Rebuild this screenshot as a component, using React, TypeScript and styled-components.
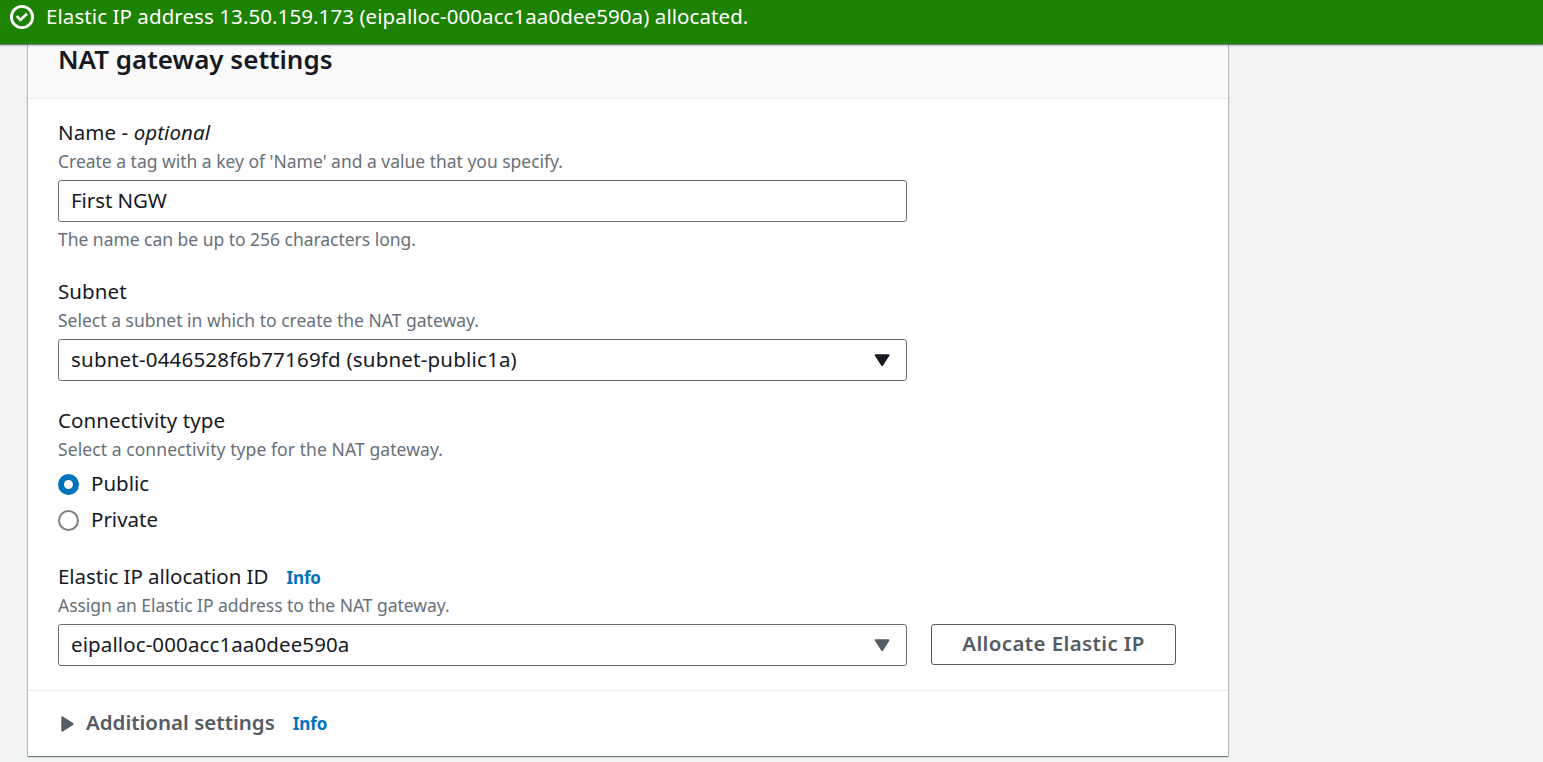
import React, { useState } from "react";
import styled, { createGlobalStyle } from "styled-components";

const GlobalStyle = createGlobalStyle`
  * { box-sizing: border-box; }
  body {
    margin: 0;
    background: #f2f3f3;
    color: #16191f;
    font-family: "Amazon Ember", "Noto Sans", "Open Sans", sans-serif;
    font-size: 20.5px;
    line-height: 33px;
    overflow: hidden;
  }
  button, input { font: inherit; color: inherit; }
`;

type Tracking = { $track?: number };

const Page = styled.div`
  height: 762px;
  display: flex;
  flex-direction: column;
`;

const Flash = styled.div`
  flex: none;
  position: relative;
  z-index: 1;
  height: 44px;
  padding: 0 10px 10px;
  display: flex;
  align-items: center;
  gap: 12px;
  background: #1d8102;
  color: #fff;
  box-shadow: 0 1px 1px 0 rgba(0, 28, 36, 0.5), 0 2px 2px 0 rgba(0, 28, 36, 0.15);
`;

const FlashText = styled.span`
  padding-bottom: 2px;
  letter-spacing: 0.075px;
  white-space: nowrap;
`;

const Card = styled.section`
  width: 1200px;
  height: 712px;
  margin-left: 28px;
  background: #fff;
  box-shadow: 0 1px 1px 0 rgba(0, 28, 36, 0.3), 1px 1px 1px 0 rgba(0, 28, 36, 0.2),
    -1px 1px 1px 0 rgba(0, 28, 36, 0.2);
`;

const CardHeader = styled.header`
  height: 55px;
  padding: 0 30px;
  background: #fafafa;
  border-bottom: 1px solid #eaeded;
`;

const CardTitle = styled.h2`
  margin: 0;
  font-size: 26px;
  font-weight: 600;
  line-height: 31px;
`;

const CardBody = styled.div`
  height: 591px;
  padding: 18px 30px 0;
  display: flex;
  flex-direction: column;
  gap: 24px;
`;

const CardFooter = styled.footer`
  height: 66px;
  padding: 0 33px;
  border-top: 1px solid #eaeded;
  display: flex;
  align-items: center;
`;

const Field = styled.div`
  display: flex;
  flex-direction: column;
`;

const Label = styled.div<Tracking>`
  height: 33px;
  padding-bottom: 2px;
  display: flex;
  align-items: center;
  white-space: pre;
  letter-spacing: ${(p) => p.$track ?? 0.08}px;
`;

const Hint = styled.div<Tracking>`
  height: 24px;
  font-size: 17.5px;
  line-height: 22px;
  color: #687078;
  letter-spacing: ${(p) => p.$track ?? 0}px;
`;

const Description = styled(Hint)`
  margin-bottom: 6px;
`;

const Constraint = styled(Hint)`
  margin-top: 6px;
`;

const TextInput = styled.input`
  width: 849px;
  height: 42px;
  padding: 0 12px 2px;
  border: 1px solid #687078;
  border-radius: 3px;
  background: #fff;
  outline: none;
  letter-spacing: -0.08px;
`;

const SelectTrigger = styled.button<Tracking & { $muted?: boolean }>`
  width: 849px;
  height: 42px;
  padding: 0 15px 2px 12px;
  display: flex;
  align-items: center;
  justify-content: space-between;
  border: 1px solid #687078;
  border-radius: 3px;
  background: #fff;
  letter-spacing: ${(p) => p.$track}px;

  svg {
    margin-top: 2px;
    fill: ${(p) => (p.$muted ? "#545b64" : "#16191f")};
  }
`;

const Inline = styled.div`
  display: flex;
  align-items: flex-start;
  gap: 24px;
`;

const ActionButton = styled.button`
  width: 245px;
  height: 41px;
  padding: 0 0 2px;
  border: 1px solid #545b64;
  border-radius: 3px;
  background: #fff;
  color: #545b64;
  font-weight: 600;
  letter-spacing: 0.38px;
`;

const RadioGroup = styled.div`
  display: flex;
  flex-direction: column;
  gap: 3px;
`;

const RadioOption = styled.label`
  height: 33px;
  padding-bottom: 2px;
  display: flex;
  align-items: center;
  gap: 12px;
  letter-spacing: 0;
`;

const RadioInput = styled.input`
  appearance: none;
  width: 21px;
  height: 21px;
  margin: 1px 0 0;
  border: 2px solid #7a8188;
  border-radius: 50%;
  background: #fff;

  &:checked { border: 6px solid #0073bb; }
`;

const InfoLink = styled.a`
  margin: 2px 0 0 18px;
  color: #0073bb;
  font-size: 17px;
  font-weight: 700;
  letter-spacing: -0.1px;
`;

const Expander = styled.span`
  margin-left: 12px;
  padding-bottom: 2px;
  color: #545b64;
  font-weight: 600;
  letter-spacing: 0;
`;

const FooterInfoLink = styled(InfoLink)`
  margin-top: 0;
`;

const CheckIcon = () => (
  <svg width="24" height="24" viewBox="0 0 24 24" fill="none" stroke="#fff">
    <circle cx="12" cy="12" r="10.6" strokeWidth="2.8" />
    <path strokeWidth="2.6" d="M6.8 11.2 10.4 15 17 8.7" />
  </svg>
);

const CaretDown = () => (
  <svg width="17" height="13" viewBox="0 0 17 13">
    <path d="M1.7 0.2H14.5Q16.2 0.2 15.3 1.7L9 11.5Q8.1 12.7 7.2 11.5L0.9 1.7Q0 0.2 1.7 0.2Z" />
  </svg>
);

const CaretRight = () => (
  <svg width="13" height="16" viewBox="0 0 13 16">
    <path fill="#545b64" d="M0.3 1.5Q0.3-0.2 1.8 0.6L12 7.1Q13.1 8 12 8.9L1.8 15.4Q0.3 16.2 0.3 14.5Z" />
  </svg>
);

export default function App() {
  const [name, setName] = useState("First NGW");
  const [connectivity, setConnectivity] = useState("Public");

  return (
    <Page>
      <GlobalStyle />
      <Flash>
        <CheckIcon />
        <FlashText>Elastic IP address 13.50.159.173 (eipalloc-000acc1aa0dee590a) allocated.</FlashText>
      </Flash>
      <Card>
        <CardHeader>
          <CardTitle>NAT gateway settings</CardTitle>
        </CardHeader>
        <CardBody>
          <Field>
            <Label>
              Name - <i>optional</i>
            </Label>
            <Description $track={-0.015}>Create a tag with a key of 'Name' and a value that you specify.</Description>
            <TextInput value={name} onChange={(e) => setName(e.target.value)} />
            <Constraint $track={-0.03}>The name can be up to 256 characters long.</Constraint>
          </Field>
          <Field>
            <Label>Subnet</Label>
            <Description>Select a subnet in which to create the NAT gateway.</Description>
            <SelectTrigger $track={0.2}>
              subnet-0446528f6b77169fd (subnet-public1a)
              <CaretDown />
            </SelectTrigger>
          </Field>
          <Field>
            <Label>Connectivity type</Label>
            <Description $track={0.08}>Select a connectivity type for the NAT gateway.</Description>
            <RadioGroup>
              {["Public", "Private"].map((option) => (
                <RadioOption key={option}>
                  <RadioInput
                    type="radio"
                    name="connectivity"
                    checked={connectivity === option}
                    onChange={() => setConnectivity(option)}
                  />
                  {option}
                </RadioOption>
              ))}
            </RadioGroup>
          </Field>
          <Field>
            <Label $track={-0.04}>
              Elastic IP allocation ID
              <InfoLink>Info</InfoLink>
            </Label>
            <Description $track={-0.05}>Assign an Elastic IP address to the NAT gateway.</Description>
            <Inline>
              <SelectTrigger $track={0.11} $muted>
                eipalloc-000acc1aa0dee590a
                <CaretDown />
              </SelectTrigger>
              <ActionButton>Allocate Elastic IP</ActionButton>
            </Inline>
          </Field>
        </CardBody>
        <CardFooter>
          <CaretRight />
          <Expander>Additional settings</Expander>
          <FooterInfoLink>Info</FooterInfoLink>
        </CardFooter>
      </Card>
    </Page>
  );
}
